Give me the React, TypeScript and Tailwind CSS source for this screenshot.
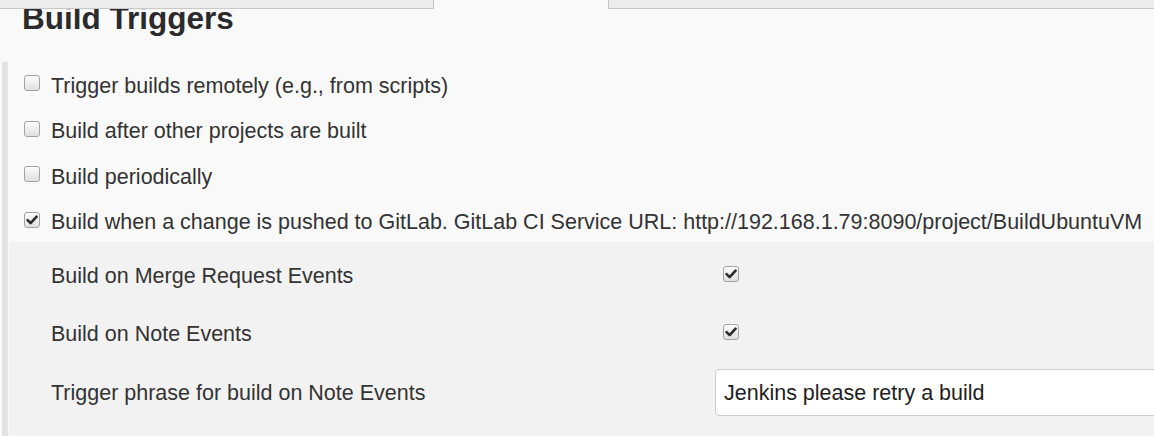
import React from "react";

function Box({ checked }: { checked?: boolean }) {
  return (
    <div className="relative w-[16px] h-[16px] shrink-0 rounded-[3px] border border-[#a2a2a2] bg-gradient-to-b from-[#fbfbfb] to-[#e0e0e0] shadow-[inset_0_1px_1px_rgba(255,255,255,0.8)]">
      {checked && (
        <svg viewBox="0 0 16 16" className="absolute left-[-1px] top-[-1px] w-[16px] h-[16px]">
          <path d="M3.6 8.2 L6.6 11.2 L12.6 4.6" fill="none" stroke="#2b2b2b" strokeWidth="2.6" strokeLinecap="round" strokeLinejoin="round" />
        </svg>
      )}
    </div>
  );
}

function Row({ checked, label }: { checked?: boolean; label: string }) {
  return (
    <div className="flex items-start h-[24px]">
      <div className="mt-[1.5px]">
        <Box checked={checked} />
      </div>
      <span className="ml-[11px] whitespace-nowrap leading-[24px]">{label}</span>
    </div>
  );
}

export default function App() {
  return (
    <div className="w-[1154px] h-[436px] overflow-hidden bg-[#f9f9f9] text-[#333] font-[Liberation_Sans,Arial,sans-serif] text-[21.5px]">
      <div className="relative z-10 flex h-[9px]">
        <div className="w-[434px] shrink-0 bg-[#ececec] border-r border-b border-[#c8c8c8]" />
        <div className="w-[174px] shrink-0" />
        <div className="flex-1 bg-[#ececec] border-l border-b border-[#c8c8c8]" />
      </div>
      <h2 className="relative mt-[-6px] ml-[22px] text-[31.5px] leading-[31px] font-bold text-[#2b2b2b] whitespace-nowrap">
        Build Triggers
      </h2>
      <div className="mt-[28px] ml-[2px] border-l-[6px] border-[#e3e3e3] h-[400px]">
        <div className="pt-[11.5px] pl-[16px] flex flex-col gap-[21.67px]">
          <Row label="Trigger builds remotely (e.g., from scripts)" />
          <Row label="Build after other projects are built" />
          <Row label="Build periodically" />
          <Row
            checked
            label="Build when a change is pushed to GitLab. GitLab CI Service URL: http://192.168.1.79:8090/project/BuildUbuntuVM"
          />
        </div>
        <div className="mt-[7.7px] ml-[1px] bg-[#f2f2f2] pt-[4.5px] h-[300px]">
          <div className="flex items-center h-[58px]">
            <div className="w-[706px] shrink-0 pl-[42px] leading-[24px] whitespace-nowrap">Build on Merge Request Events</div>
            <div className="pl-[8px] mb-[3px]">
              <Box checked />
            </div>
          </div>
          <div className="flex items-center h-[58px]">
            <div className="w-[706px] shrink-0 pl-[42px] leading-[24px] whitespace-nowrap">Build on Note Events</div>
            <div className="pl-[8px] mb-[3px]">
              <Box checked />
            </div>
          </div>
          <div className="flex items-center h-[60px]">
            <div className="w-[706px] shrink-0 pl-[42px] leading-[24px] whitespace-nowrap">Trigger phrase for build on Note Events</div>
            <div className="w-[480px] h-[47px] shrink-0 flex items-center bg-white border border-[#cdcdcd] rounded-[4px] pl-[8px] text-[#1e1e1e] whitespace-nowrap">
              Jenkins please retry a build
            </div>
          </div>
        </div>
      </div>
    </div>
  );
}
